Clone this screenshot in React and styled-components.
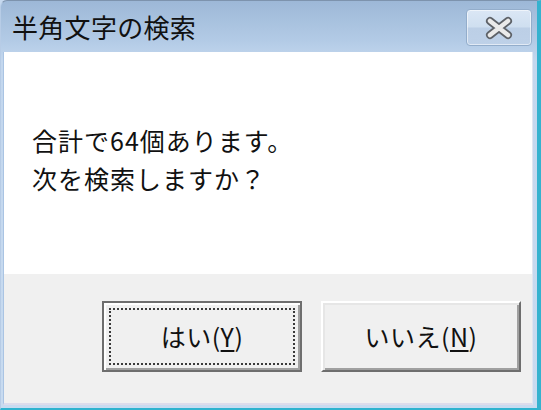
import React from "react";
import styled, { createGlobalStyle } from "styled-components";

const Global = createGlobalStyle`
  html, body { margin: 0; padding: 0; background: #c6d9ef; }
  body { width: 541px; height: 410px; overflow: hidden; }
  * { box-sizing: border-box; }
`;

const FONT = `"Noto Sans CJK JP", "Noto Sans", sans-serif`;

const Window = styled.div`
  width: 541px;
  height: 410px;
  display: flex;
  flex-direction: column;
  background: linear-gradient(#9db8d7 0px, #b3cbe6 40px, #c3d7ee 60px, #c8dbf0 100%);
  border-top-left-radius: 7px;
  border-top: 1px solid #7d93ad;
  border-left: 1px solid #b7cce6;
  border-right: 4px solid #35b2cf;
  border-bottom: 2px solid #2fb3cf;
  overflow: hidden;
  font-family: ${FONT};
`;

const TitleBar = styled.div`
  height: 51px;
  display: flex;
  align-items: center;
  justify-content: space-between;
  padding: 0 0 0 11px;
`;

const Title = styled.div`
  font-size: 26px;
  color: #111;
  letter-spacing: 0.3px;
  line-height: 1;
`;

const CloseButton = styled.div`
  width: 66px;
  height: 37px;
  margin-right: 5px;
  margin-top: 2px;
  border: 1px solid #93adcb;
  border-radius: 4px;
  background: linear-gradient(#dbe7f5 0%, #cfdff0 48%, #bccfe6 52%, #bed1e8 100%);
  box-shadow: inset 0 0 0 1px rgba(255, 255, 255, 0.55);
  display: flex;
  align-items: center;
  justify-content: center;
`;

const Body = styled.div`
  flex: 1;
  display: flex;
  flex-direction: column;
  margin-left: 2px;
  margin-right: 4px;
  margin-bottom: 3px;
  border-left: 1px solid #aac4e3;
  border-right: 1px solid #dfe6f2;
  border-bottom: 2px solid #dcdcec;
`;

const MessageArea = styled.div`
  height: 222px;
  background: #ffffff;
  padding: 69px 0 0 28px;
`;

const Message = styled.p`
  margin: 0;
  font-size: 25px;
  line-height: 38px;
  letter-spacing: 1px;
  color: #111;
`;

const Footer = styled.div`
  flex: 1;
  background: #f0f0f0;
  display: flex;
  justify-content: flex-end;
  align-items: flex-start;
  gap: 19px;
  padding: 27px 11px 0 0;
`;

const Button = styled.button`
  width: 200px;
  height: 71px;
  padding: 0 0 2px 0;
  background: #f0f0f0;
  font-family: ${FONT};
  font-size: 25px;
  letter-spacing: 0.5px;
  color: #111;
  cursor: default;
  border-style: solid;
  border-width: 2px;
  border-color: ${(p) =>
    p.$default ? "#6e6e6e" : "#ffffff #6e6e6e #6e6e6e #ffffff"};
  box-shadow: ${(p) =>
    p.$default
      ? "inset 2px 2px 0 #ffffff, inset -2px -2px 0 #a0a0a0"
      : "inset 2px 2px 0 #e6e6e6, inset -2px -2px 0 #a0a0a0"};
  outline: ${(p) => (p.$default ? "2px dotted #3a3a3a" : "none")};
  outline-offset: -9px;
  display: flex;
  align-items: center;
  justify-content: center;
`;

const Key = styled.span`
  text-decoration: underline;
  text-underline-offset: 3px;
`;

function CloseGlyph() {
  return (
    <svg width="30" height="24" viewBox="0 0 30 24">
      <path d="M6 5 L24 19 M24 5 L6 19" stroke="#5e6268" strokeWidth="8" strokeLinecap="round" fill="none" />
      <path d="M6 5 L24 19 M24 5 L6 19" stroke="#eaeaea" strokeWidth="4.5" strokeLinecap="round" fill="none" />
    </svg>
  );
}

export default function App() {
  return (
    <>
      <Global />
      <Window>
        <TitleBar>
          <Title>半角文字の検索</Title>
          <CloseButton>
            <CloseGlyph />
          </CloseButton>
        </TitleBar>
        <Body>
          <MessageArea>
            <Message>合計で64個あります。</Message>
            <Message>次を検索しますか？</Message>
          </MessageArea>
          <Footer>
            <Button $default>
              はい(<Key>Y</Key>)
            </Button>
            <Button>
              いいえ(<Key>N</Key>)
            </Button>
          </Footer>
        </Body>
      </Window>
    </>
  );
}
